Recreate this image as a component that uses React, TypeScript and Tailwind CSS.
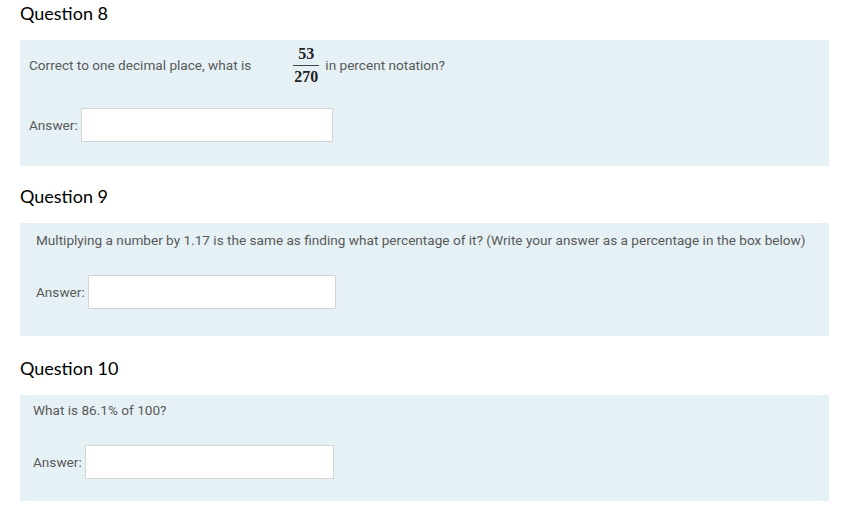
import * as React from 'react';

const body = { fontFamily: 'Roboto, "Liberation Sans", sans-serif' };
const head = { fontFamily: 'Lato, "Open Sans", sans-serif' };

function AnswerRow({ pad, inputW, gap }: { pad: string; inputW: string; gap: string }) {
    return (
        <div className={`flex items-center ${pad}`}>
            <span className="text-[13.6px] text-[#595959]">Answer:</span>
            <div className={`${gap} ${inputW} h-[34px] bg-white border border-[#d3d6d8]`} />
        </div>
    );
}

export default function App() {
    return (
        <div className="w-[843px] h-[519px] bg-white px-5 overflow-hidden" style={body}>
            {/* Question 8 */}
            <h3 className="text-[18px] leading-[26px] text-black" style={head}>Question 8</h3>
            <div className="mt-[14px] w-[809px] h-[126px] bg-[#e6f1f5] pl-[9px] pt-[5px]">
                <div className="flex items-center h-[40px] text-[13.6px] text-[#595959]">
                    <span>Correct to one decimal place, what is</span>
                    <span
                        className="ml-[42px] inline-flex flex-col items-center text-[16px] font-bold text-[#222] leading-[18px]"
                        style={{ fontFamily: '"Liberation Serif", serif' }}
                    >
                        <span className="px-[1px]">53</span>
                        <span className="w-full h-px bg-[#444] my-[2px]" />
                        <span className="px-[1px]">270</span>
                    </span>
                    <span className="ml-[6px]">in percent notation?</span>
                </div>
                <AnswerRow pad="mt-[23px]" inputW="w-[252px]" gap="ml-[3px]" />
            </div>

            {/* Question 9 */}
            <h3 className="mt-[17px] text-[18px] leading-[26px] text-black" style={head}>Question 9</h3>
            <div className="mt-[14px] w-[809px] h-[113px] bg-[#e6f1f5] pl-4 pt-[7px]">
                <p className="text-[13.6px] leading-5 text-[#595959]">
                    Multiplying a number by 1.17 is the same as finding what percentage of it? (Write your answer as a percentage in the box below)
                </p>
                <AnswerRow pad="mt-[25px]" inputW="w-[248px]" gap="ml-[3px]" />
            </div>

            {/* Question 10 */}
            <h3 className="mt-[19px] text-[18px] leading-[26px] text-black" style={head}>Question 10</h3>
            <div className="mt-[14px] w-[809px] h-[106px] bg-[#e6f1f5] pl-[13px] pt-[5px]">
                <p className="text-[13.6px] leading-5 text-[#595959]">What is 86.1% of 100?</p>
                <AnswerRow pad="mt-[25px]" inputW="w-[249px]" gap="ml-[3px]" />
            </div>
        </div>
    );
}
